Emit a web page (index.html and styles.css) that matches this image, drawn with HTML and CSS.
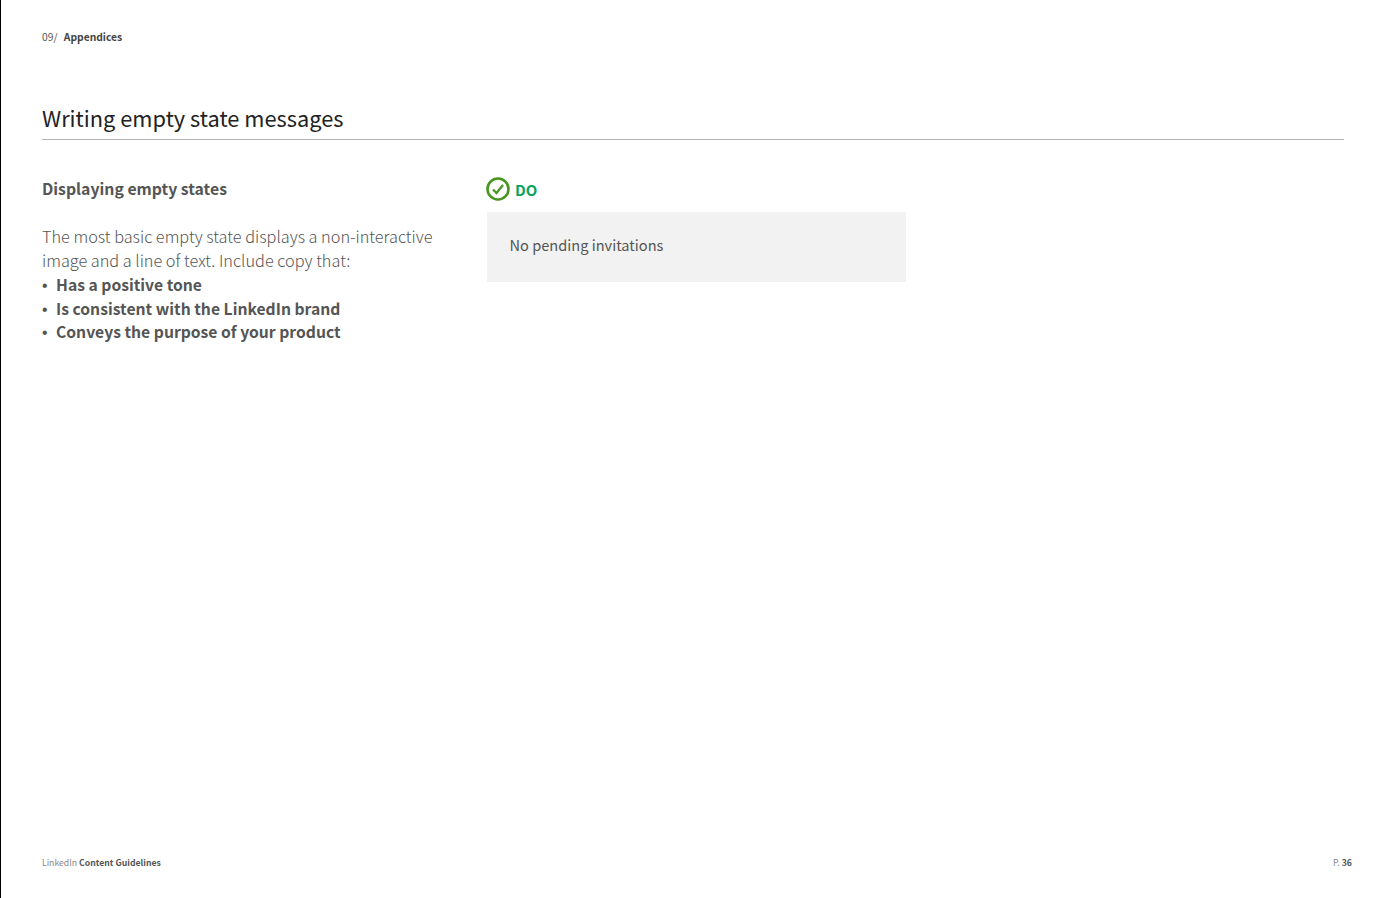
FILE: index.html
```html
<!DOCTYPE html>
<html lang="en">
<head>
    <meta charset="UTF-8">
    <title>Writing empty state messages</title>
    <link rel="stylesheet" href="styles.css">
</head>
<body>
    <div class="page">
        <div class="crumb"><span class="crumb-num">09/</span> <b>Appendices</b></div>
        <h1>Writing empty state messages</h1>
        <div class="columns">
            <div class="copy">
                <h2>Displaying empty states</h2>
                <p>The most basic empty state displays a non-interactive image and a line of text. Include copy that:</p>
                <ul>
                    <li>Has a positive tone</li>
                    <li>Is consistent with the LinkedIn brand</li>
                    <li>Conveys the purpose of your product</li>
                </ul>
            </div>
            <div class="example">
                <div class="do">
                    <svg class="do-icon" width="24" height="24" viewBox="0 0 24 24">
                        <circle cx="12" cy="12" r="10.5" fill="none" stroke="#46961f" stroke-width="2.6"/>
                        <path d="M7 12.5l3.5 3.5L17 8" fill="none" stroke="#46961f" stroke-width="2.2"/>
                    </svg>
                    <span>DO</span>
                </div>
                <div class="sample">No pending invitations</div>
            </div>
        </div>
        <div class="footer">
            <div><span class="light">LinkedIn</span> <b>Content Guidelines</b></div>
            <div><span class="light">P.</span> <b>36</b></div>
        </div>
    </div>
</body>
</html>
```

FILE: styles.css
```css
html, body {
    height: 100%;
}
body {
    margin: 0;
    background-color: #fff;
    color: #555;
    font-family: "Noto Sans CJK SC", "Open Sans", sans-serif;
    border-left: 1px solid #000;
}
.page {
    box-sizing: border-box;
    height: 100%;
    display: flex;
    flex-direction: column;
    padding: 29px 39px 28px 41px;
}
.crumb {
    font-size: 10.3px;
    line-height: 16px;
}
.crumb b {
    margin-left: 4px;
    color: #444;
}
.crumb-num {
    font-weight: 400;
}
h1 {
    margin: 52px 0 0;
    padding-bottom: 0;
    border-bottom: 1px solid #b3b3b3;
    width: 1302px;
    font-size: 21.8px;
    line-height: 42px;
    font-weight: 400;
    color: #222;
}
.columns {
    display: flex;
    margin-top: 36px;
    flex: 1;
}
.copy {
    width: 444px;
}
h2 {
    margin: 0 0 22px;
    font-size: 15.8px;
    line-height: 26px;
    font-weight: 700;
}
.copy p {
    margin: 0;
    max-width: 400px;
    font-size: 16.3px;
    line-height: 24px;
    font-weight: 300;
}
ul {
    margin: 1px 0 0;
    padding: 0;
    list-style: none;
    font-size: 15.7px;
    line-height: 23.5px;
    font-weight: 700;
}
li {
    display: flex;
    align-items: baseline;
}
li::before {
    content: "\2022";
    width: 14px;
    flex: none;
    line-height: 1;
    font-family: "Liberation Sans", sans-serif;
    font-weight: 400;
}
.example {
    width: 419px;
    margin-left: 1px;
    padding-top: 1px;
}
.do {
    display: flex;
    align-items: center;
    gap: 5px;
    margin-left: -1px;
    color: #0aa35c;
    font-size: 15px;
    font-weight: 700;
    height: 24px;
}
.sample {
    margin-top: 11px;
    height: 70px;
    line-height: 66px;
    padding-left: 22.5px;
    background-color: #f2f2f2;
    font-size: 14.6px;
    font-weight: 400;
}
.footer {
    display: flex;
    justify-content: space-between;
    font-size: 8.7px;
    line-height: 14px;
}
.light {
    font-weight: 400;
    color: #888;
}
```
